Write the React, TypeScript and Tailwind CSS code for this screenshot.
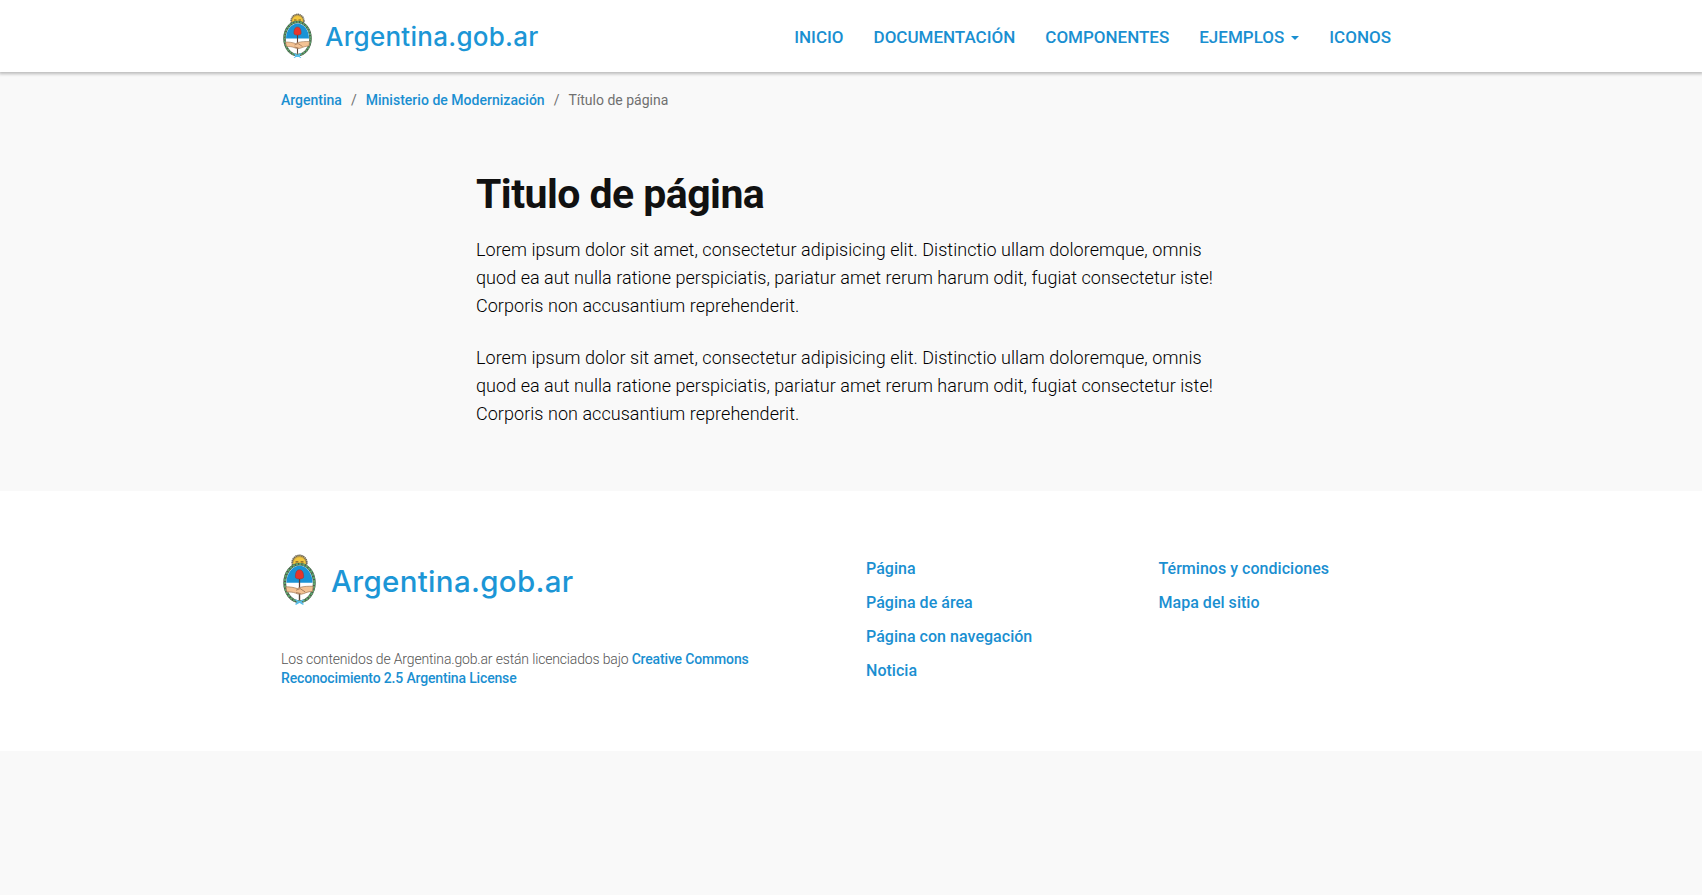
function Crest({ className }: { className: string }) {
  return (
    <svg viewBox="0 0 58 90" className={className} aria-hidden="true">
      <circle cx="29" cy="14.5" r="12.8" fill="#c9a548" stroke="#6b6658" strokeWidth="3" strokeDasharray="2.5 1" />
      <circle cx="29" cy="15.5" r="10.5" fill="#f3c83f" />
      <path d="M22 13h5M31 13h5M25 19h8" stroke="#7a5a28" strokeWidth="2.2" />
      <ellipse cx="29" cy="50" rx="26" ry="33" fill="#fff" stroke="#4c5a4c" strokeWidth="5" />
      <ellipse cx="29" cy="50" rx="26" ry="33" fill="none" stroke="#5ea56c" strokeWidth="4" strokeDasharray="4 2" />
      <path d="M6 50C6 33 17 20 29 20s23 13 23 30z" fill="#1a93d6" />
      <path d="M29 39v41" stroke="#5a3d35" strokeWidth="2.2" />
      <path d="M22 41c-1-8 2-14 7-14s8 6 7 14c-3 3-11 3-14 0z" fill="#e8352c" stroke="#9d3430" strokeWidth="1" />
      <path d="M5 57c8 0 14 1 20 3l5-2c7-2 14-2 23-2l-1 9c-6 0-11 2-16 4-6 2-10 1-14-1-5-2-10-2-15-2z" fill="#f3c294" stroke="#9b7654" strokeWidth="1.2" />
      <path d="M23 63l7-3 9 6M23 67l8 2" fill="none" stroke="#886044" strokeWidth="1.2" />
      <path d="M29 71v9" stroke="#5a4a3e" strokeWidth="2" />
      <path d="M22 80l14 8M36 80l-14 8M25 81v6M33 81v6" stroke="#58bde9" strokeWidth="2.4" />
    </svg>
  );
}

const pageLinks = ["Página", "Página de área", "Página con navegación", "Noticia"];
const siteLinks = ["Términos y condiciones", "Mapa del sitio"];

function LinkList({ items }: { items: string[] }) {
  return (
    <ul className="flex flex-col gap-2.5 pt-[66px] text-base leading-6 font-medium tracking-[0.03px] text-[#1a8fd1]">
      {items.map((item) => (
        <li key={item}>
          <a href="#">{item}</a>
        </li>
      ))}
    </ul>
  );
}

function Paragraph() {
  return (
    <p className="text-lg leading-7 font-light tracking-[0.045px] text-black">
      Lorem ipsum dolor sit amet, consectetur adipisicing elit. Distinctio ullam doloremque, omnis quod ea aut nulla
      ratione perspiciatis, pariatur amet rerum harum odit, fugiat consectetur iste! Corporis non accusantium
      reprehenderit.
    </p>
  );
}

export default function App() {
  return (
    <div className="min-h-screen bg-[#f9f9f9] font-['Roboto',sans-serif]">
      <header className="h-[72px] bg-white shadow-[0_1px_3px_1px_rgba(0,0,0,0.25)]">
        <div className="mx-auto flex h-full w-[1140px] items-center justify-between">
          <a href="#" className="flex items-center">
            <Crest className="ml-0.5 h-[46px] w-[29px]" />
            <span className="ml-[13px] pt-px font-['Inter',sans-serif] text-[26px] leading-9 font-[550] tracking-[0.27px] text-[#1c96d6]">
              Argentina.gob.ar
            </span>
          </a>
          <nav className="flex items-center gap-[30px] pt-0.5 pr-[30px] text-[17px] leading-6 font-medium text-[#1a8fd1]">
            <a href="#">INICIO</a>
            <a href="#">DOCUMENTACIÓN</a>
            <a href="#">COMPONENTES</a>
            <a href="#" className="flex items-center">
              EJEMPLOS
              <span className="mt-0.5 ml-[7px] border-x-4 border-t-4 border-x-transparent border-t-[#1a8fd1]" />
            </a>
            <a href="#">ICONOS</a>
          </nav>
        </div>
      </header>

      <main className="mx-auto h-[419px] w-[1140px] pt-[18px]">
        <ol className="flex text-sm leading-5 text-[#707070]">
          <li className="font-medium text-[#1a8fd1]">Argentina</li>
          <li className="px-[9px]">/</li>
          <li className="font-medium tracking-[0.02px] text-[#1a8fd1]">Ministerio de Modernización</li>
          <li className="px-[9px]">/</li>
          <li>Título de página</li>
        </ol>
        <article className="mx-auto w-[750px] pt-[60px]">
          <h1 className="text-[41px] leading-[48px] font-bold tracking-[-0.54px] text-[#111]">Titulo de página</h1>
          <div className="flex flex-col gap-6 pt-[18px]">
            <Paragraph />
            <Paragraph />
          </div>
        </article>
      </main>

      <footer className="h-[260px] bg-white">
        <div className="mx-auto grid w-[1140px] grid-cols-[585px_292.5px_1fr]">
          <div className="pt-[63px]">
            <a href="#" className="flex items-center">
              <Crest className="ml-0.5 h-[52px] w-[33px]" />
              <span className="ml-[15px] pt-px font-['Inter',sans-serif] text-[29.5px] leading-9 font-[550] tracking-[0.32px] text-[#1c96d6]">
                Argentina.gob.ar
              </span>
            </a>
            <p className="mt-11 w-[490px] text-sm leading-[19px] font-light tracking-[-0.16px] text-[#555]">
              Los contenidos de Argentina.gob.ar están licenciados bajo{" "}
              <a href="#" className="font-medium text-[#1a8fd1]">
                Creative Commons Reconocimiento 2.5 Argentina License
              </a>
            </p>
          </div>
          <LinkList items={pageLinks} />
          <LinkList items={siteLinks} />
        </div>
      </footer>
    </div>
  );
}
